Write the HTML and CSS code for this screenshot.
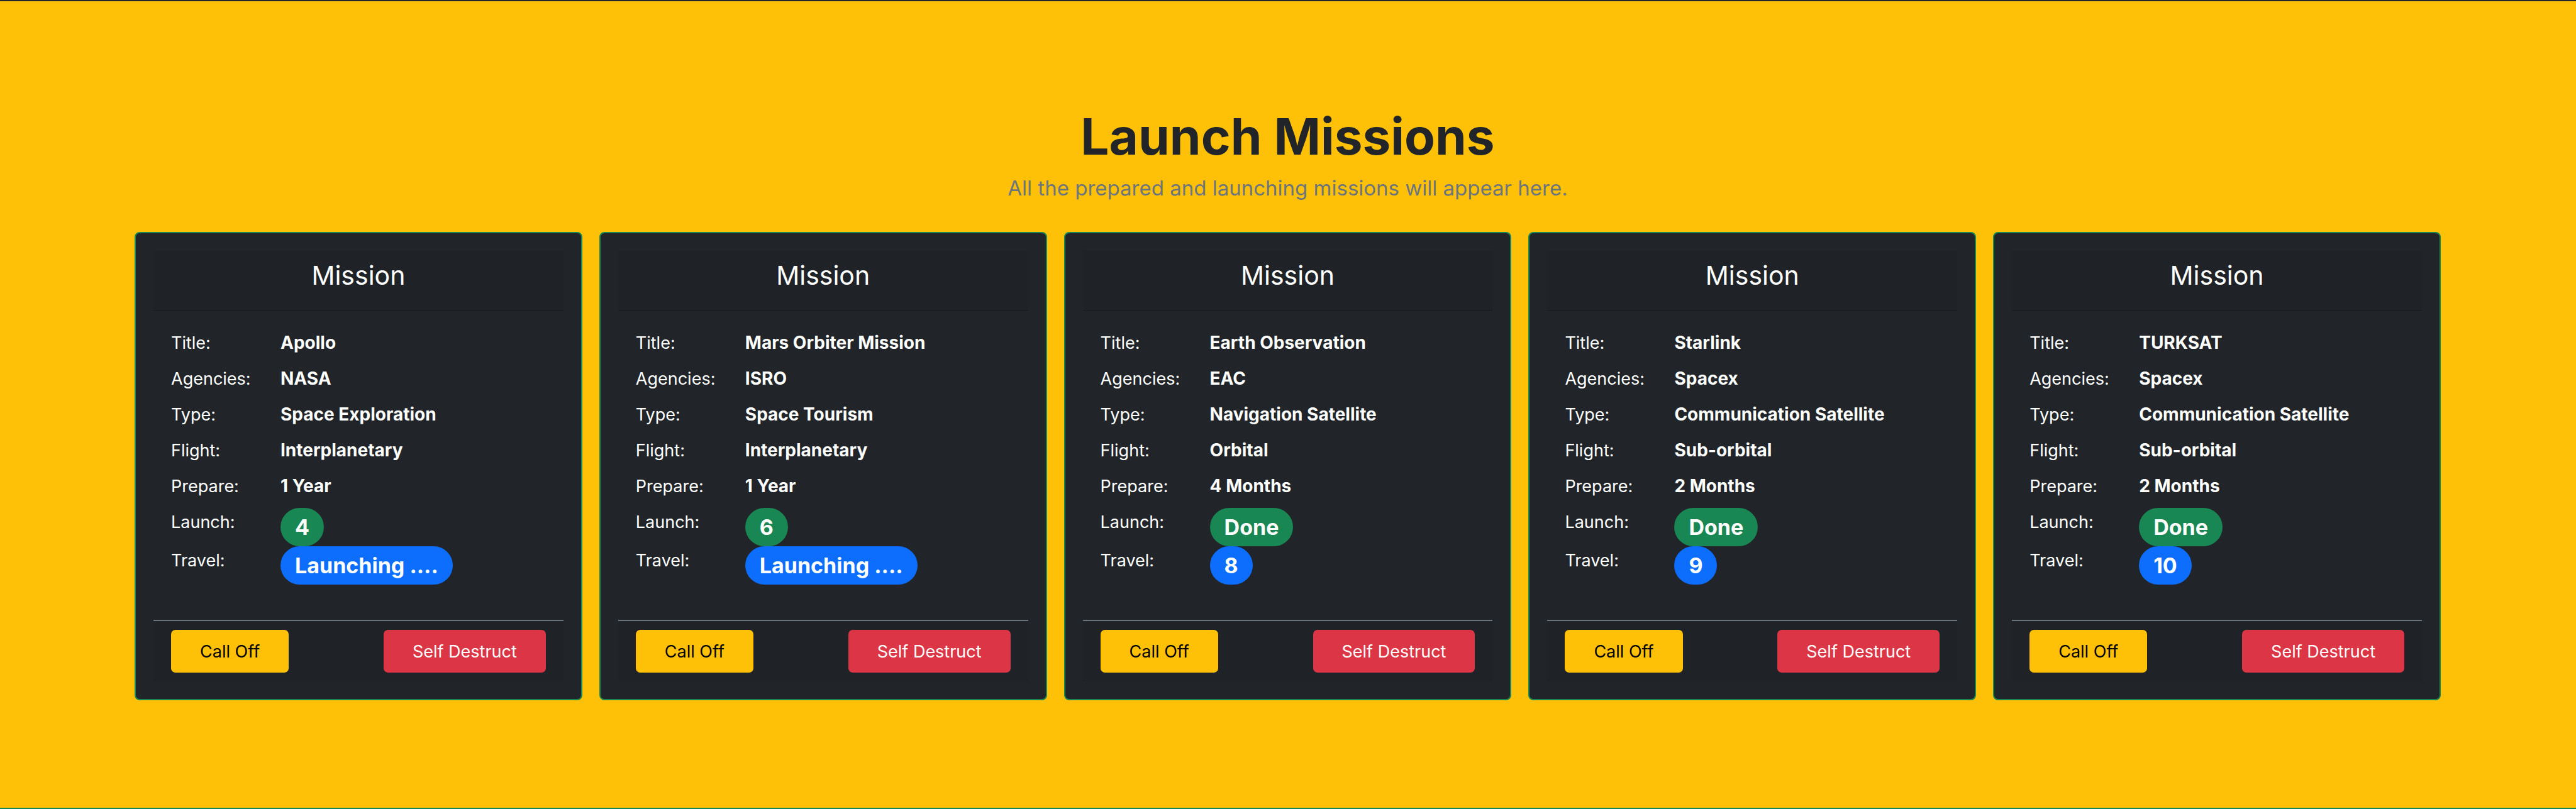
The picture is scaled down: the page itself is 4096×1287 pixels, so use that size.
FILE: index.html
```html
<!DOCTYPE html>
<html lang="en">
<head>
<meta charset="utf-8">
<meta name="viewport" content="width=device-width, initial-scale=1">
<title>Launch Missions</title>
<link rel="stylesheet" href="styles.css">
</head>
<body>
<main class="missions">
  <header class="intro">
    <h1 class="intro-title">Launch Missions</h1>
    <p class="intro-text">All the prepared and launching missions will appear here.</p>
  </header>
  <div class="mission-grid">
    <article class="card">
      <h2 class="card-header">Mission</h2>
      <dl class="details">
        <dt>Title:</dt><dd>Apollo</dd>
        <dt>Agencies:</dt><dd>NASA</dd>
        <dt>Type:</dt><dd>Space Exploration</dd>
        <dt>Flight:</dt><dd>Interplanetary</dd>
        <dt>Prepare:</dt><dd>1 Year</dd>
        <dt>Launch:</dt><dd><span class="badge badge-launch">4</span></dd>
        <dt>Travel:</dt><dd><span class="badge badge-travel">Launching ....</span></dd>
      </dl>
      <footer class="card-footer">
        <button type="button" class="btn btn-warning">Call Off</button>
        <button type="button" class="btn btn-danger">Self Destruct</button>
      </footer>
    </article>
    <article class="card">
      <h2 class="card-header">Mission</h2>
      <dl class="details">
        <dt>Title:</dt><dd>Mars Orbiter Mission</dd>
        <dt>Agencies:</dt><dd>ISRO</dd>
        <dt>Type:</dt><dd>Space Tourism</dd>
        <dt>Flight:</dt><dd>Interplanetary</dd>
        <dt>Prepare:</dt><dd>1 Year</dd>
        <dt>Launch:</dt><dd><span class="badge badge-launch">6</span></dd>
        <dt>Travel:</dt><dd><span class="badge badge-travel">Launching ....</span></dd>
      </dl>
      <footer class="card-footer">
        <button type="button" class="btn btn-warning">Call Off</button>
        <button type="button" class="btn btn-danger">Self Destruct</button>
      </footer>
    </article>
    <article class="card">
      <h2 class="card-header">Mission</h2>
      <dl class="details">
        <dt>Title:</dt><dd>Earth Observation</dd>
        <dt>Agencies:</dt><dd>EAC</dd>
        <dt>Type:</dt><dd>Navigation Satellite</dd>
        <dt>Flight:</dt><dd>Orbital</dd>
        <dt>Prepare:</dt><dd>4 Months</dd>
        <dt>Launch:</dt><dd><span class="badge badge-launch">Done</span></dd>
        <dt>Travel:</dt><dd><span class="badge badge-travel">8</span></dd>
      </dl>
      <footer class="card-footer">
        <button type="button" class="btn btn-warning">Call Off</button>
        <button type="button" class="btn btn-danger">Self Destruct</button>
      </footer>
    </article>
    <article class="card">
      <h2 class="card-header">Mission</h2>
      <dl class="details">
        <dt>Title:</dt><dd>Starlink</dd>
        <dt>Agencies:</dt><dd>Spacex</dd>
        <dt>Type:</dt><dd>Communication Satellite</dd>
        <dt>Flight:</dt><dd>Sub-orbital</dd>
        <dt>Prepare:</dt><dd>2 Months</dd>
        <dt>Launch:</dt><dd><span class="badge badge-launch">Done</span></dd>
        <dt>Travel:</dt><dd><span class="badge badge-travel">9</span></dd>
      </dl>
      <footer class="card-footer">
        <button type="button" class="btn btn-warning">Call Off</button>
        <button type="button" class="btn btn-danger">Self Destruct</button>
      </footer>
    </article>
    <article class="card">
      <h2 class="card-header">Mission</h2>
      <dl class="details">
        <dt>Title:</dt><dd>TURKSAT</dd>
        <dt>Agencies:</dt><dd>Spacex</dd>
        <dt>Type:</dt><dd>Communication Satellite</dd>
        <dt>Flight:</dt><dd>Sub-orbital</dd>
        <dt>Prepare:</dt><dd>2 Months</dd>
        <dt>Launch:</dt><dd><span class="badge badge-launch">Done</span></dd>
        <dt>Travel:</dt><dd><span class="badge badge-travel">10</span></dd>
      </dl>
      <footer class="card-footer">
        <button type="button" class="btn btn-warning">Call Off</button>
        <button type="button" class="btn btn-danger">Self Destruct</button>
      </footer>
    </article>
  </div>
</main>
</body>
</html>
```
FILE: styles.css
```css
*,
*::before,
*::after {
  box-sizing: border-box;
}

body {
  margin: 0;
  background: #ffc107;
  color: #212529;
  font-family: Inter, "Liberation Sans", sans-serif;
  font-size: 27px;
  line-height: 45px;
}

h1,
h2,
p,
dl,
dd {
  margin: 0;
}

.missions {
  min-height: 100vh;
  padding: 164px 215px 164px 214px;
  border-top: 2px solid #212529;
  border-bottom: 2px solid #198754;
}

.intro {
  margin-bottom: 43px;
  text-align: center;
}

.intro-title {
  margin-bottom: 4px;
  font-size: 80px;
  font-weight: 700;
  line-height: 102px;
}

.intro-text {
  color: #6c757d;
  font-size: 33px;
  line-height: 54px;
}

.mission-grid {
  display: grid;
  grid-template-columns: repeat(5, 1fr);
  gap: 27px;
}

.card {
  padding: 28px;
  border: 2px solid #198754;
  border-radius: 8px;
  background: #212529;
  color: #fff;
}

.card-header {
  padding: 14px 28px 29px;
  border-bottom: 2px solid rgba(0, 0, 0, 0.125);
  background: rgba(0, 0, 0, 0.03);
  font-size: 41px;
  font-weight: 400;
  line-height: 51px;
  text-align: center;
}

.details {
  display: grid;
  grid-template-columns: 174px 1fr;
  grid-template-rows: repeat(5, 57px) repeat(2, 61px);
  padding: 28px 28px 56px;
}

.details dd {
  font-size: 28px;
  font-weight: 700;
}

.badge {
  display: block;
  width: fit-content;
  padding: 12px 23px;
  border-radius: 31px;
  font-size: 34px;
  line-height: 37px;
}

.badge-launch {
  background: #198754;
}

.badge-travel {
  background: #0d6efd;
}

.card-footer {
  display: flex;
  justify-content: space-between;
  padding: 14px 28px;
  border-top: 2px solid #6c757d;
  background: rgba(0, 0, 0, 0.03);
}

.btn {
  padding: 13px 46px 11px;
  border: 0;
  border-radius: 7px;
  font: inherit;
  line-height: 44px;
}

.btn-warning {
  background: #ffc107;
  color: #000;
}

.btn-danger {
  background: #dc3545;
  color: #fff;
}
```
